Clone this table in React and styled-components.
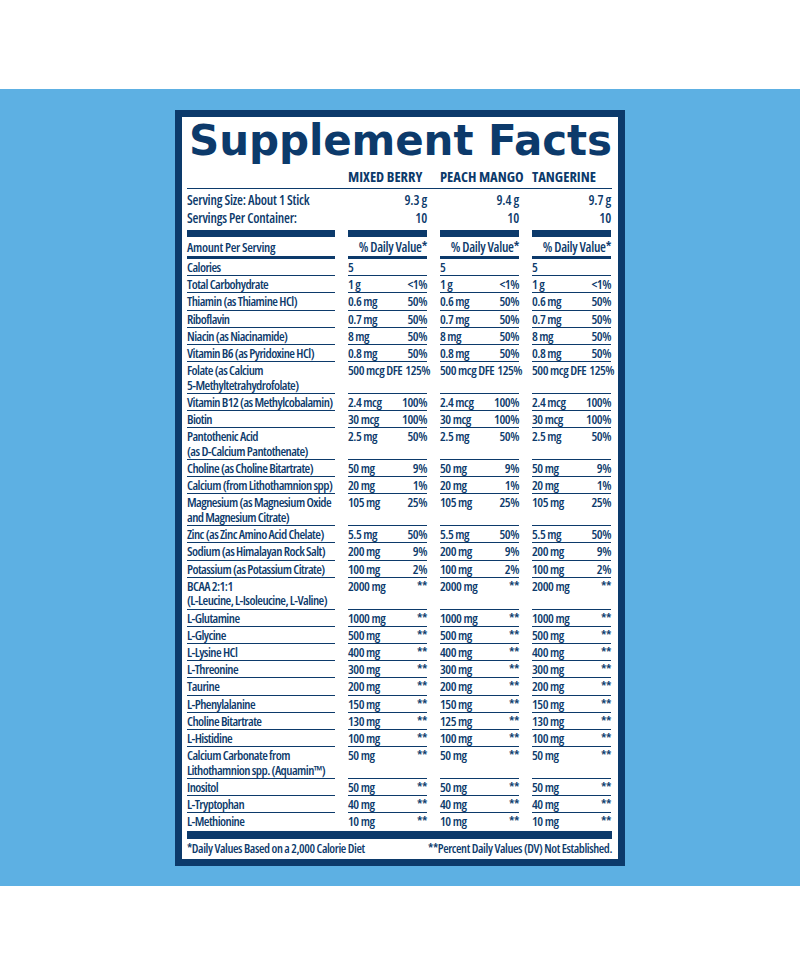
import React from "react";
import styled, { createGlobalStyle, css } from "styled-components";

const NAVY = "#0c3a6b";
const SKY = "#5db0e3";

const GlobalStyle = createGlobalStyle`
  body {
    margin: 0;
    background: #fff;
  }
`;

const Page = styled.div`
  padding-top: 89px;
  background: #fff;
`;

const Band = styled.div`
  height: 797px;
  padding-top: 21px;
  box-sizing: border-box;
  background: ${SKY};
`;

const Panel = styled.div`
  width: 450px;
  height: 756px;
  box-sizing: border-box;
  margin-left: 175px;
  padding: 0 6px 0 5px;

  border: 7px solid ${NAVY};
  background: #fff;
  color: ${NAVY};
  font-family: "Open Sans", "Roboto", sans-serif;
  font-stretch: 75%;
  font-weight: 550;
  font-size: 13px;
  letter-spacing: -0.55px;
`;

const Title = styled.h1`
  margin: 2px 0 0;
  padding-left: 2px;
  text-align: center;
  font-family: "DejaVu Sans", "Inter", sans-serif;
  font-stretch: normal;
  font-size: 42px;
  line-height: 44px;
  font-weight: 700;
  letter-spacing: -0.1px;
`;

const grid = css`
  display: grid;
  grid-template-columns: 148px repeat(3, 79px);
  column-gap: 13px;
`;

const FlavourRow = styled.div`
  ${grid};
  padding: 6px 0 4px;
  border-bottom: 1px solid ${NAVY};
  font-size: 14.5px;
  line-height: 15px;
  font-weight: 700;
  letter-spacing: 0;
`;

const Flavour = styled.div`
  white-space: nowrap;
`;

const ServingRow = styled.div`
  ${grid};
  padding: 2px 0 3px;
  font-size: 13.5px;
  line-height: 18px;
  font-weight: 650;
  letter-spacing: -0.2px;
  white-space: nowrap;
`;

const ServingValue = styled.div`
  text-align: right;
`;

const BarRow = styled.div`
  ${grid};
`;

const Bar = styled.div`
  height: 7px;
  background: ${NAVY};
`;

const AmountRow = styled.div`
  ${grid};
`;

const AmountCell = styled.div`
  padding: 2.5px 0 1.5px;
  line-height: 15px;
  border-bottom: 3px solid ${NAVY};
  text-align: ${(p) => (p.$right ? "right" : "left")};
  white-space: nowrap;
  font-size: ${(p) => (p.$right ? 13.5 : 13)}px;
  letter-spacing: -0.3px;
`;

const NutrientRow = styled.div`
  ${grid};
`;

const Cell = styled.div`
  padding: 1px 0 0.6px;
  line-height: 14.6px;
  border-bottom: 1px solid ${(p) => (p.$last ? "transparent" : NAVY)};
  white-space: pre;
`;

const ValueCell = styled(Cell)`
  display: flex;
  justify-content: space-between;
  align-items: flex-start;
  gap: 3px;
  letter-spacing: -0.45px;
`;

const ThickBar = styled.div`
  height: 8px;
  margin-top: 1px;
  background: ${NAVY};
`;

const Footer = styled.div`
  display: flex;
  justify-content: space-between;
  padding-top: 2px;
  line-height: 16px;
  font-size: 12.5px;
  letter-spacing: -0.4px;
  white-space: nowrap;
`;

const flavours = ["MIXED BERRY", "PEACH MANGO", "TANGERINE"];
const servings = ["9.3 g", "9.4 g", "9.7 g"];

const same = (amount, pct) => [
  [amount, pct],
  [amount, pct],
  [amount, pct],
];

const nutrients = [
  ["Calories", same("5", "")],
  ["Total Carbohydrate", same("1 g", "<1%")],
  ["Thiamin (as Thiamine HCl)", same("0.6 mg", "50%")],
  ["Riboflavin", same("0.7 mg", "50%")],
  ["Niacin (as Niacinamide)", same("8 mg", "50%")],
  ["Vitamin B6 (as Pyridoxine HCl)", same("0.8 mg", "50%")],
  ["Folate (as Calcium\n5-Methyltetrahydrofolate)", same("500 mcg DFE", "125%")],
  ["Vitamin B12 (as Methylcobalamin)", same("2.4 mcg", "100%")],
  ["Biotin", same("30 mcg", "100%")],
  ["Pantothenic Acid\n(as D-Calcium Pantothenate)", same("2.5 mg", "50%")],
  ["Choline (as Choline Bitartrate)", same("50 mg", "9%")],
  ["Calcium (from Lithothamnion spp)", same("20 mg", "1%")],
  ["Magnesium (as Magnesium Oxide\nand Magnesium Citrate)", same("105 mg", "25%")],
  ["Zinc (as Zinc Amino Acid Chelate)", same("5.5 mg", "50%")],
  ["Sodium (as Himalayan Rock Salt)", same("200 mg", "9%")],
  ["Potassium (as Potassium Citrate)", same("100 mg", "2%")],
  ["BCAA 2:1:1\n(L-Leucine, L-Isoleucine, L-Valine)", same("2000 mg", "**")],
  ["L-Glutamine", same("1000 mg", "**")],
  ["L-Glycine", same("500 mg", "**")],
  ["L-Lysine HCl", same("400 mg", "**")],
  ["L-Threonine", same("300 mg", "**")],
  ["Taurine", same("200 mg", "**")],
  ["L-Phenylalanine", same("150 mg", "**")],
  [
    "Choline Bitartrate",
    [
      ["130 mg", "**"],
      ["125 mg", "**"],
      ["130 mg", "**"],
    ],
  ],
  ["L-Histidine", same("100 mg", "**")],
  ["Calcium Carbonate from\nLithothamnion spp. (Aquamin™)", same("50 mg", "**")],
  ["Inositol", same("50 mg", "**")],
  ["L-Tryptophan", same("40 mg", "**")],
  ["L-Methionine", same("10 mg", "**")],
];

export default function App() {
  return (
    <Page>
      <GlobalStyle />
      <Band>
        <Panel>
          <Title>Supplement Facts</Title>

          <FlavourRow>
            <span />
            {flavours.map((f) => (
              <Flavour key={f}>{f}</Flavour>
            ))}
          </FlavourRow>

          <ServingRow>
            <div>
              Serving Size: About 1 Stick
              <br />
              Servings Per Container:
            </div>
            {servings.map((s) => (
              <ServingValue key={s}>
                {s}
                <br />
                10
              </ServingValue>
            ))}
          </ServingRow>

          <BarRow>
            <Bar />
            <Bar />
            <Bar />
            <Bar />
          </BarRow>

          <AmountRow>
            <AmountCell>Amount Per Serving</AmountCell>
            {flavours.map((f) => (
              <AmountCell key={f} $right>
                % Daily Value*
              </AmountCell>
            ))}
          </AmountRow>

          {nutrients.map(([name, values], i) => {
            const last = i === nutrients.length - 1;
            return (
              <NutrientRow key={name}>
                <Cell $last={last}>{name}</Cell>
                {values.map(([amount, pct], j) => (
                  <ValueCell key={j} $last={last}>
                    <span>{amount}</span>
                    <span>{pct}</span>
                  </ValueCell>
                ))}
              </NutrientRow>
            );
          })}

          <ThickBar />

          <Footer>
            <span>*Daily Values Based on a 2,000 Calorie Diet</span>
            <span>**Percent Daily Values (DV) Not Established.</span>
          </Footer>
        </Panel>
      </Band>
    </Page>
  );
}
